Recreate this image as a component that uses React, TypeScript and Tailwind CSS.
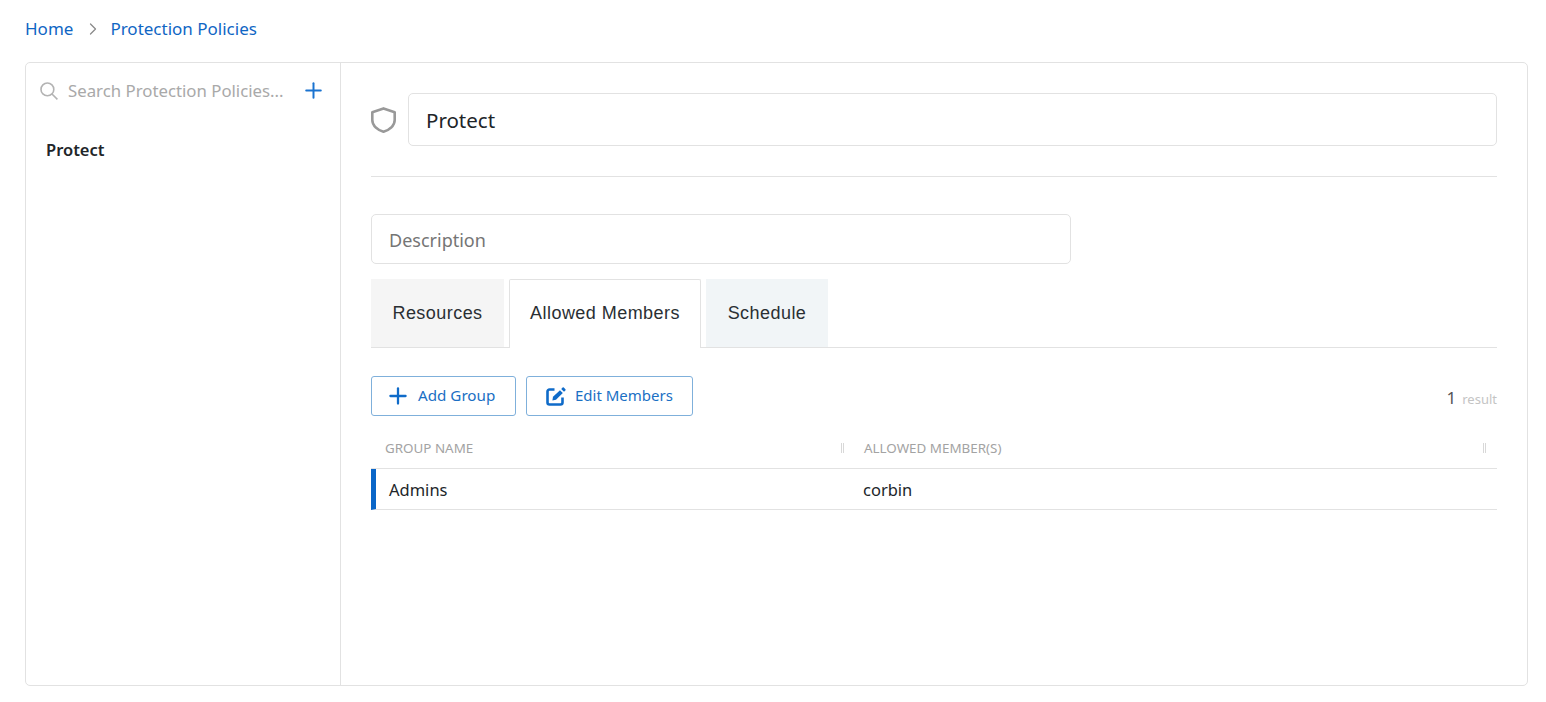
import { ChevronRight, Plus } from "lucide-react";

const App = () => {
	return (
		<div className="h-[702px] bg-white pl-[25px] pr-[18px] font-['Noto_Sans',sans-serif] text-[#212529] overflow-hidden">
			{/* Breadcrumb */}
			<div className="flex items-center h-[62px] pb-[4px] text-[17px] text-[#0f66c4]">
				<span>Home</span>
				<ChevronRight className="w-[20px] h-[20px] ml-[10px] mr-[7px] text-[#8a8a8a]" strokeWidth={1.5} />
				<span>Protection Policies</span>
			</div>

			<div className="flex h-[624px] border border-[#e2e2e2] rounded-[5px]">
				{/* Sidebar */}
				<div className="w-[315px] shrink-0 border-r border-[#e2e2e2]">
					<div className="flex items-center h-[55px] pl-[14px] pr-[14px]">
						<svg width="18" height="18" viewBox="0 0 18 18" fill="none" stroke="#b3b3b3" strokeWidth="1.6">
							<circle cx="7.4" cy="7.4" r="6.4" />
							<path d="M12 12 L17.4 17.4" />
						</svg>
						<span className="ml-[10px] flex-1 pt-[1px] text-[16.8px] text-[#a9a9a9] whitespace-nowrap">
							Search Protection Policies...
						</span>
						<Plus className="w-[25px] h-[25px] text-[#1a73d0]" strokeWidth={1.9} />
					</div>
					<div className="pl-[20px] pt-[18px] text-[16.5px] font-semibold leading-[28px]">Protect</div>
				</div>

				{/* Main */}
				<div className="flex-1 px-[30px] pt-[30px]">
					<div className="flex items-center gap-[12px]">
						<svg width="25" height="26" viewBox="0 0 25 26" fill="none" stroke="#999999" strokeWidth="2.6" strokeLinejoin="round">
							<path d="M12.5 1.4 L23.7 5.2 V13 C23.7 19 18 23 12.5 24.7 C7 23 1.3 19 1.3 13 V5.2 Z" />
						</svg>
						<div className="flex-1 flex items-center h-[53px] pt-[1px] px-[17px] border border-[#e2e2e2] rounded-[5px] text-[20.5px]">
							Protect
						</div>
					</div>
					<div className="mt-[30px] border-t border-[#e2e2e2]" />

					<div className="mt-[37px] w-[700px] h-[50px] flex items-center pt-[2px] px-[17px] border border-[#e2e2e2] rounded-[5px] text-[18px] text-[#757575]">
						Description
					</div>

					{/* Tabs */}
					<div className="mt-[15px] flex items-end h-[69px] border-b border-[#e2e2e2] font-['Liberation_Sans',sans-serif] text-[18px] tracking-[0.45px] text-[#2a2f33]">
						<div className="w-[133px] h-[68px] flex items-center justify-center bg-[#f5f5f5]">Resources</div>
						<div className="ml-[5px] w-[192px] h-[69px] -mb-px pb-[2px] flex items-center justify-center bg-white border border-b-0 border-[#e2e2e2] rounded-t-[2px]">
							Allowed Members
						</div>
						<div className="ml-[5px] w-[122px] h-[68px] flex items-center justify-center bg-[#f1f5f7]">Schedule</div>
					</div>

					{/* Toolbar */}
					<div className="mt-[28px] flex items-center gap-[10px]">
						<div className="w-[145px] h-[40px] flex items-center pl-[13px] gap-[7px] pb-[1px] border border-[#7fb0db] rounded-[3px] text-[15.2px] text-[#1a6fc4]">
							<Plus className="w-[26px] h-[26px] text-[#0f6bc9]" strokeWidth={2.1} />
							<span>Add Group</span>
						</div>
						<div className="w-[167px] h-[40px] flex items-center pl-[19px] gap-[9px] pb-[1px] border border-[#7fb0db] rounded-[3px] text-[15px] text-[#1a6fc4]">
							<svg width="20" height="20" viewBox="0 0 20 20" className="text-[#0f6bc9]">
								<path d="M8.5 3.5 H3.5 A2 2 0 0 0 1.5 5.5 V16.5 A2 2 0 0 0 3.5 18.5 H14.5 A2 2 0 0 0 16.5 16.5 V11.5" fill="none" stroke="currentColor" strokeWidth="2.6" />
								<path d="M14 4.2 L16.8 7 L10 13.8 L6.4 14.4 L7 10.8 Z" fill="currentColor" />
								<path d="M15.2 3 L16.6 1.6 Q17.2 1 17.8 1.6 L19.4 3.2 Q20 3.8 19.4 4.4 L18 5.8 Z" fill="currentColor" />
							</svg>
							<span>Edit Members</span>
						</div>
						<div className="ml-auto pt-[3px] flex items-baseline gap-[6px]">
							<span className="text-[17px] text-[#555555]">1</span>
							<span className="text-[13px] text-[#c4c4c4]">result</span>
						</div>
					</div>

					{/* Table */}
					<div className="mt-[12px] flex h-[41px] items-center pt-[1px] border-b border-[#e2e2e2] text-[13.4px] text-[#a3a3a3]">
						<div className="w-[482px] pl-[14px] flex items-center justify-between pr-[9px]">
							<span>GROUP NAME</span>
							<span className="w-[3px] h-[10px] border-x border-[#d8d8d8]" />
						</div>
						<div className="flex-1 pl-[11px] flex items-center justify-between pr-[11px]">
							<span>ALLOWED MEMBER(S)</span>
							<span className="w-[3px] h-[10px] border-x border-[#d8d8d8]" />
						</div>
					</div>
					<div className="flex h-[41px] items-center pt-[2px] border-b border-[#e2e2e2] border-l-[5px] border-l-[#0a66c8] text-[16.5px]">
						<div className="w-[477px] pl-[13px]">Admins</div>
						<div className="flex-1 pl-[10px]">corbin</div>
					</div>
				</div>
			</div>
		</div>
	);
};

export default App;
